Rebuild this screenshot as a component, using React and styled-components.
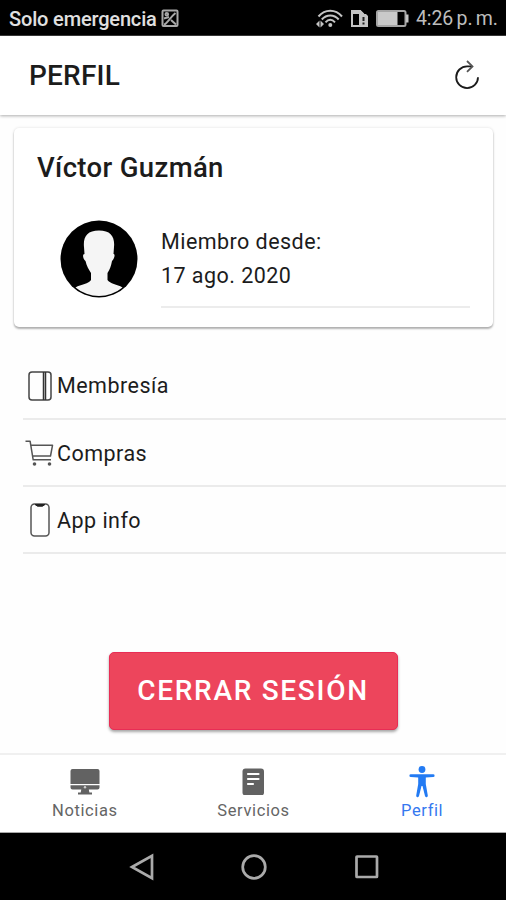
import React from "react";
import styled, { createGlobalStyle } from "styled-components";

const Global = createGlobalStyle`
  * { box-sizing: border-box; }
  body { margin: 0; background: #fff; font-family: Roboto, "Liberation Sans", sans-serif; color: #1c1c1c; }
`;

const Screen = styled.div`
  width: 506px;
  height: 900px;
  display: flex;
  flex-direction: column;
  overflow: hidden;
  background: #fefefe;
  svg { display: block; flex: none; }
`;

const StatusBar = styled.div`
  height: 36px;
  flex: none;
  background: #000;
  border-bottom: 1px solid #3a3a3a;
  display: flex;
  align-items: center;
  padding: 2px 9px 0;
  color: #e0e0e0;
`;
const Carrier = styled.span`
  font-size: 20px;
  font-weight: 500;
  letter-spacing: -0.16px;
  margin-right: 4px;
`;
const StatusIcons = styled.div`
  display: flex;
  align-items: center;
  margin-left: auto;
  gap: 7px;
`;
const Clock = styled.span`
  font-size: 19.5px;
  line-height: 22px;
  padding-top: 1px;
  color: #bdbdbd;
  width: 81px;
  white-space: nowrap;
  letter-spacing: -0.1px;
  word-spacing: -1.4px;
`;

const Header = styled.header`
  height: 79px;
  flex: none;
  display: flex;
  align-items: center;
  justify-content: space-between;
  padding: 0 25px 0 29px;
  background: #fff;
  box-shadow: 0 1px 3px rgba(0, 0, 0, 0.32);
`;
const Title = styled.h1`
  margin: 0;
  font-size: 28px;
  font-weight: 500;
  line-height: 32px;
  letter-spacing: 0.2px;
`;

const Card = styled.section`
  height: 199px;
  flex: none;
  margin: 13px 13px 0 14px;
  padding: 24px 23px 0;
  border-radius: 5px;
  background: #fff;
  box-shadow: 0 2px 2px rgba(0, 0, 0, 0.28), 0 0 3px rgba(0, 0, 0, 0.13);
`;
const Name = styled.h2`
  margin: 0;
  font-size: 27.5px;
  font-weight: 500;
  line-height: 32px;
  letter-spacing: 0.35px;
`;
const Member = styled.div`
  display: flex;
  padding: 36px 0 0 23px;
  gap: 23px;
`;
const MemberText = styled.div`
  flex: 1;
  height: 88px;
  font-size: 21.5px;
  line-height: 34px;
  border-bottom: 2px solid #ececec;
  padding-top: 5px;
  letter-spacing: 0.45px;
`;

const List = styled.nav`
  flex: none;
  margin: 24px 0 0 23px;
`;
const Row = styled.div`
  height: ${(p) => p.$height}px;
  display: flex;
  align-items: center;
  gap: 2px;
  border-bottom: 2px solid #ebebeb;
  font-size: 21.5px;
  letter-spacing: 0.47px;
  span { padding-top: 2px; }
`;

const LogoutButton = styled.button`
  width: 289px;
  height: 78px;
  flex: none;
  align-self: center;
  margin: 98px 0 0;
  padding: 0;
  border: 1px solid #e82d55;
  border-radius: 5px;
  background: #ed455c;
  color: #fff;
  font: 500 28px/32px Roboto, sans-serif;
  letter-spacing: 1.7px;
  box-shadow: 0 2px 3px rgba(0, 0, 0, 0.35);
`;

const Tabs = styled.nav`
  height: 80px;
  flex: none;
  margin-top: auto;
  display: grid;
  grid-template-columns: repeat(3, 1fr);
  border-top: 2px solid #f0f0f0;
  border-bottom: 1px solid #a8a8a8;
  background: #fff;
`;
const Tab = styled.div`
  display: flex;
  flex-direction: column;
  align-items: center;
  padding: 10px 0 0 1px;
  font-size: 16.5px;
  line-height: 20px;
  letter-spacing: 0.6px;
  gap: 6px;
  color: ${(p) => (p.$active ? "#3578f0" : "#656565")};
`;

const SystemBar = styled.div`
  height: 67px;
  flex: none;
  background: #000;
  display: flex;
  justify-content: center;
  align-items: center;
  gap: 84px;
  padding-left: 2px;
`;

const ScreenshotIcon = () => (
  <svg width="18" height="19" viewBox="0 0 18 19" fill="none" stroke="#a9a9a9" strokeWidth="2">
    <rect x="1.5" y="1.5" width="15" height="15.5" rx="1" />
    <path d="M3 15.5C6 15 8 9.500 14.500 4M3 9.500 8 8M10 11l5 4.500" />
    <circle cx="5.800" cy="5.300" r="1.300" />
  </svg>
);

const WifiIcon = () => (
  <svg width="27" height="19" viewBox="0 0 27 19" fill="none" stroke="#c4c4c4" strokeWidth="2">
    <path d="M2.500 7.500C9-.3 19.500-.3 26 7.500M5.800 10.500C10.500 5 18 5 22.700 10.500M9.500 13.300C12.500 10 16 10 19 13.300" />
    <circle cx="14.300" cy="16" r="2" fill="#c4c4c4" stroke="none" />
    <path d="M0 15l3.500-3.500v7zM8 15l-3.500-3.500v7z" fill="#c4c4c4" stroke="none" />
  </svg>
);

const SimIcon = () => (
  <svg width="19" height="19" viewBox="0 0 19 19" fill="none" stroke="#c4c4c4" strokeWidth="2">
    <path d="M9 17H2V2h8l3 3v2" />
    <path d="M2 2h8l2 2H2z" fill="#c4c4c4" />
    <path d="M9 5h7l2 2v11H9z" fill="#c4c4c4" stroke="none" />
    <path d="M13.500 8v4M13.500 13.500v2" stroke="#222" />
  </svg>
);

const BatteryIcon = () => (
  <svg width="33" height="19" viewBox="0 0 33 19">
    <rect x="1" y="2" width="28.500" height="15" rx="1.500" fill="none" stroke="#a5a5a5" strokeWidth="2" />
    <rect x="2" y="3" width="19.500" height="13" fill="#c9c9c9" />
    <path d="M30 5.500h2.500v8H30z" fill="#c4c4c4" />
  </svg>
);

const RefreshIcon = () => (
  <svg width="27" height="31" viewBox="0 0 27 31" fill="none" stroke="#1b1b1b" strokeWidth="1.800">
    <path d="M24 17.200A10.900 10.900 0 1 1 13.100 6.300H18" />
    <path d="M13 1 18.500 6.400 13 11.800" stroke="#555" />
  </svg>
);

const Avatar = () => (
  <svg width="78" height="78" viewBox="0 0 78 78">
    <circle cx="39" cy="39" r="38.500" fill="#000" />
    <path
      d="M39 10.500C27 10.500 23 17 24 27L24.500 34C22 34 23 39 25.500 41C26.500 46 29 50 31 53L31 60C29 64 21 64 15.500 67.500A36.500 36.500 0 0 0 62.500 67.500C57 64 50 64 47.500 60L47.500 53C50 49 51 46 52 41C54.500 39 55.500 34 53.500 34L54 27C55 17 51 10.500 39 10.500Z"
      fill="#f5f5f5"
    />
  </svg>
);

const CardIcon = () => (
  <svg width="32" height="34" viewBox="0 -1 32 34" fill="none" stroke="#444" strokeWidth="1.500">
    <rect x="6" y="3" width="22" height="28" rx="3" />
    <path d="M20.500 3v28M22.500 3v28" stroke="#333" strokeWidth="1.500" />
  </svg>
);

const CartIcon = () => (
  <svg width="32" height="34" viewBox="0 -1 32 34" fill="none" stroke="#555" strokeWidth="1.500" strokeLinejoin="round">
    <path d="M2.500 4.200h4.600L10.200 22.800H28M8 8.300h21.500L27.500 19H9.600" />
    <circle cx="11.500" cy="27" r="1.800" fill="#555" stroke="none" />
    <circle cx="26.500" cy="27" r="1.800" fill="#555" stroke="none" />
  </svg>
);

const PhoneIcon = () => (
  <svg width="32" height="36" viewBox="0 0 32 36" fill="none" stroke="#555" strokeWidth="1.500">
    <rect x="8" y="2" width="18" height="32" rx="3.500" />
    <path d="M12 2.500h10l-2.500 1.700h-5z" fill="#222" stroke="#222" strokeWidth="1" />
  </svg>
);

const DesktopIcon = () => (
  <svg width="30" height="30" viewBox="0 0 30 30" fill="#626262">
    <path d="M2.500 2h25a2 2 0 0 1 2 2v13H.5V4a2 2 0 0 1 2-2zM.5 18.300h29v2.200a2 2 0 0 1-2 2h-8.700l.6 3H22V27.500H8V25.500h2.700l.6-3H2.500a2 2 0 0 1-2-2z" transform="translate(0 2)" />
    <circle cx="15" cy="22.300" r="1.200" fill="#ccc" />
  </svg>
);

const ReaderIcon = () => (
  <svg width="30" height="30" viewBox="0 0 30 30">
    <rect x="4.500" y="3.500" width="21.500" height="27" rx="3" fill="#626262" />
    <path d="M10 9h10.500M10 14h10.500M10 19h5" stroke="#fff" strokeWidth="2.200" strokeLinecap="round" />
  </svg>
);

const BodyIcon = () => (
  <svg width="30" height="30" viewBox="0 0 30 30" fill="#237bf3" overflow="visible">
    <circle cx="15" cy="4.500" r="3.400" />
    <path d="M3.800 9.300h22.400a1.300 1.300 0 0 1 0 2.800L18.800 12.600v6.400l2 11.500a1.400 1.400 0 0 1-2.800.6L15.500 21h-1L12 31.100A1.400 1.400 0 0 1 9.200 30.500l2-11.500v-6.400l-7.400-.5a1.300 1.300 0 0 1 0-2.800z" />
  </svg>
);

const BackIcon = () => (
  <svg width="28" height="28" viewBox="0 0 28 28" fill="none" stroke="#aaa" strokeWidth="2.700">
    <path d="M4 14 24 2.800v22.400z" />
  </svg>
);
const HomeIcon = () => (
  <svg width="28" height="28" viewBox="0 0 28 28" fill="none" stroke="#aaa" strokeWidth="2.700">
    <circle cx="14" cy="14" r="11.300" />
  </svg>
);
const RecentsIcon = () => (
  <svg width="28" height="28" viewBox="0 0 28 28" fill="none" stroke="#aaa" strokeWidth="2.700">
    <rect x="4.500" y="3.500" width="20.500" height="20.500" rx="0.500" />
  </svg>
);

const rows = [
  { label: "Membresía", icon: <CardIcon />, height: 69 },
  { label: "Compras", icon: <CartIcon />, height: 67 },
  { label: "App info", icon: <PhoneIcon />, height: 67 },
];

const tabs = [
  { label: "Noticias", icon: <DesktopIcon /> },
  { label: "Servicios", icon: <ReaderIcon /> },
  { label: "Perfil", icon: <BodyIcon />, active: true },
];

export default function App() {
  return (
    <Screen>
      <Global />
      <StatusBar>
        <Carrier>Solo emergencia</Carrier>
        <ScreenshotIcon />
        <StatusIcons>
          <WifiIcon />
          <SimIcon />
          <BatteryIcon />
          <Clock>4:26 p. m.</Clock>
        </StatusIcons>
      </StatusBar>
      <Header>
        <Title>PERFIL</Title>
        <RefreshIcon />
      </Header>
      <Card>
        <Name>Víctor Guzmán</Name>
        <Member>
          <Avatar />
          <MemberText>
            <div>Miembro desde:</div>
            <div>17 ago. 2020</div>
          </MemberText>
        </Member>
      </Card>
      <List>
        {rows.map((row) => (
          <Row key={row.label} $height={row.height}>
            {row.icon}
            <span>{row.label}</span>
          </Row>
        ))}
      </List>
      <LogoutButton>CERRAR SESIÓN</LogoutButton>
      <Tabs>
        {tabs.map((tab) => (
          <Tab key={tab.label} $active={tab.active}>
            {tab.icon}
            <span>{tab.label}</span>
          </Tab>
        ))}
      </Tabs>
      <SystemBar>
        <BackIcon />
        <HomeIcon />
        <RecentsIcon />
      </SystemBar>
    </Screen>
  );
}
